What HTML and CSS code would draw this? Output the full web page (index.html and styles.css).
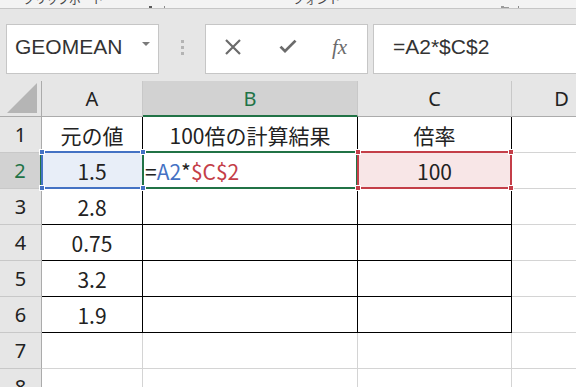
FILE: index.html
```html
<!DOCTYPE html>
<html lang="ja">
<head>
<meta charset="utf-8">
<link rel="stylesheet" href="styles.css">
</head>
<body>
<div class="app">
  <div class="ribbon">
    <span class="rlabel clip">クリップボード</span>
    <span class="launcher l1"><svg width="18" height="8" viewBox="0 0 18 8"><rect x="2" y="0" width="3" height="4" fill="#5a5a5a"/><rect x="5" y="2" width="2" height="2" fill="#5a5a5a"/><rect x="17" y="0" width="1" height="4" fill="#8a8a8a"/></svg></span>
    <span class="rlabel font">フォント</span>
    <span class="launcher l2"><svg width="18" height="8" viewBox="0 0 18 8"><rect x="0" y="0" width="3" height="4" fill="#9a9a9a"/><rect x="3" y="1" width="5" height="3" fill="#9a9a9a"/><rect x="17" y="0" width="1" height="4" fill="#8a8a8a"/></svg></span>
  </div>
  <div class="fbar">
    <div class="namebox">
      <span class="nametext">GEOMEAN</span>
      <svg class="ddarrow" width="8" height="5" viewBox="0 0 8 5"><path d="M0 0 L8 0 L4 4 Z" fill="#7a7a7a"/></svg>
    </div>
    <div class="dots"><i></i><i></i><i></i></div>
    <div class="btnbox">
      <svg class="ico" width="18" height="18" viewBox="0 0 18 18"><path d="M2 2 L16 16 M16 2 L2 16" stroke="#6b6b6b" stroke-width="2.2" fill="none"/></svg>
      <svg class="ico" width="20" height="18" viewBox="0 0 20 18"><path d="M1.5 9.5 L7 15 L18.5 3.5 L16.5 1.8 L7 11.3 L3.5 7.8 Z" fill="#6b6b6b"/></svg>
      <span class="fx">fx</span>
    </div>
    <div class="finput"><span class="ftext">=A2*$C$2</span></div>
  </div>
  <div class="sheet">
    <div class="hc corner"><svg width="30" height="30" viewBox="0 0 30 30"><path d="M30 0 L30 30 L0 30 Z" fill="#b5b5b5"/></svg></div>
    <div class="hc col">A</div>
    <div class="hc col sel">B</div>
    <div class="hc col">C</div>
    <div class="hc col last">D</div>

    <div class="rh">1</div>
    <div class="c bk ctr">元の値</div>
    <div class="c bk ctr">100倍の計算結果</div>
    <div class="c bk ctr">倍率</div>
    <div class="c"></div>

    <div class="rh sel">2</div>
    <div class="c bk ctr a2">1.5</div>
    <div class="c bk formula">=<span class="ref-a">A2</span>*<span class="ref-c">$C$2</span></div>
    <div class="c bk ctr c2">100</div>
    <div class="c"></div>

    <div class="rh">3</div>
    <div class="c bk ctr">2.8</div>
    <div class="c bk"></div>
    <div class="c bk"></div>
    <div class="c"></div>

    <div class="rh">4</div>
    <div class="c bk ctr">0.75</div>
    <div class="c bk"></div>
    <div class="c bk"></div>
    <div class="c"></div>

    <div class="rh">5</div>
    <div class="c bk ctr">3.2</div>
    <div class="c bk"></div>
    <div class="c bk"></div>
    <div class="c"></div>

    <div class="rh">6</div>
    <div class="c bk ctr">1.9</div>
    <div class="c bk"></div>
    <div class="c bk"></div>
    <div class="c"></div>

    <div class="rh">7</div>
    <div class="c"></div>
    <div class="c"></div>
    <div class="c"></div>
    <div class="c"></div>

    <div class="rh">8</div>
    <div class="c"></div>
    <div class="c"></div>
    <div class="c"></div>
    <div class="c"></div>

    <div class="selbox blue"><i class="h tl"></i><i class="h tr"></i><i class="h bl"></i><i class="h br"></i></div>
    <div class="selbox green"></div>
    <div class="selbox red"><i class="h tl"></i><i class="h tr"></i><i class="h bl"></i><i class="h br"></i></div>
  </div>
</div>
</body>
</html>
```
FILE: styles.css
```css
* { box-sizing: border-box; }
html, body { margin: 0; padding: 0; }
body {
  width: 576px;
  height: 387px;
  overflow: hidden;
  background: #ffffff;
  font-family: "Noto Sans CJK JP", "Noto Sans", sans-serif;
}
.app { width: 576px; height: 387px; overflow: hidden; }

/* ribbon strip */
.ribbon {
  height: 9px;
  background: #f3f3f3;
  border-bottom: 1px solid #c6c6c6;
  display: flex;
  align-items: flex-start;
  overflow: hidden;
  font-size: 12px;
  color: #444;
}
.rlabel { line-height: 14px; margin-top: -8px; white-space: nowrap; }
.clip { margin-left: 23px; letter-spacing: -0.5px; }
.launcher { display: block; height: 8px; }
.l1 { margin-left: 43px; }
.font { margin-left: 128px; }
.l2 { margin-left: 160px; }

/* formula bar */
.fbar {
  height: 72px;
  background: #e6e6e6;
  display: flex;
  align-items: flex-start;
  padding-top: 15px;
  padding-left: 6px;
}
.namebox {
  width: 153px;
  height: 50px;
  background: #fff;
  border: 1px solid #c6c6c6;
  display: flex;
  align-items: center;
  padding-left: 8px;
  padding-bottom: 4px;
}
.nametext {
  font-family: "Liberation Sans", Arial, sans-serif;
  font-size: 21px;
  color: #333;
}
.ddarrow { margin-left: auto; margin-right: 8px; margin-top: -6px; }
.dots {
  width: 46px;
  height: 46px;
  display: flex;
  flex-direction: column;
  align-items: center;
  justify-content: center;
  gap: 3px;
}
.dots i { display: block; width: 3px; height: 3px; background: #b4b4b4; }
.btnbox {
  width: 163px;
  height: 50px;
  background: #fff;
  border: 1px solid #c6c6c6;
  display: flex;
  align-items: center;
  padding-left: 18px;
  padding-bottom: 4px;
  gap: 36px;
}
.fx {
  font-family: "Liberation Serif", serif;
  font-style: italic;
  font-size: 21px;
  color: #6b6b6b;
  margin-left: -2px;
}
.finput {
  flex: 1;
  height: 50px;
  margin-left: 5px;
  background: #fff;
  border: 1px solid #c6c6c6;
  border-right: none;
  padding-left: 19px;
  padding-bottom: 4px;
  display: flex;
  align-items: center;
}
.ftext {
  font-family: "Liberation Sans", Arial, sans-serif;
  font-size: 21px;
  color: #333;
}

/* sheet grid */
.sheet {
  position: relative;
  display: grid;
  grid-template-columns: 42px 101px 215px 154px 100px;
  grid-auto-rows: 36px;
  height: 306px;
  overflow: hidden;
  font-size: 21px;
  color: #222;
}
.hc {
  background: #e6e6e6;
  border-right: 1px solid #c8c8c8;
  border-bottom: 1px solid #ababab;
  display: flex;
  align-items: center;
  justify-content: center;
  font-family: "Noto Sans", sans-serif;
  font-size: 20px;
  color: #222;
}
.corner { border-right-color: #ababab; justify-content: flex-end; align-items: flex-end; padding: 0 4px 3px 0; }
.hc.sel {
  background: #d2d2d2;
  color: #217346;
  border-bottom: 2px solid #217346;
}
.rh {
  background: #e6e6e6;
  border-right: 1px solid #ababab;
  border-bottom: 1px solid #c8c8c8;
  display: flex;
  align-items: center;
  justify-content: center;
  font-family: "Noto Sans", sans-serif;
  font-size: 20px;
  color: #222;
}
.rh.sel {
  background: #d2d2d2;
  color: #217346;
  border-right: 2px solid #217346;
}
.c {
  border-right: 1px solid #d4d4d4;
  border-bottom: 1px solid #d4d4d4;
  display: flex;
  align-items: center;
  white-space: nowrap;
}
.c.bk { border-right-color: #000; border-bottom-color: #000; }
.ctr { justify-content: center; }
.a2 { background: #e8eef8; }
.c2 { background: #f8e6e7; }
.formula { padding-left: 2px; }
.ref-a { color: #4472c4; }
.ref-c { color: #c43e48; }

.selbox { position: absolute; top: 70px; height: 38px; border: 2px solid; }
.blue { left: 41px; width: 103px; border-color: #4472c4; }
.green { left: 142px; width: 216px; border-color: #217346; }
.red { left: 357px; width: 155px; border-color: #c43e48; }
.h { position: absolute; width: 6px; height: 6px; border: 1px solid #fff; }
.blue .h { background: #4472c4; }
.red .h { background: #c43e48; }
.h.tl { top: -4px; left: -4px; }
.h.tr { top: -4px; right: -4px; }
.h.bl { bottom: -4px; left: -4px; }
.h.br { bottom: -4px; right: -4px; }
.blue .h { z-index: 2; }
.red { z-index: 1; }
.red .h { z-index: 3; }
```
